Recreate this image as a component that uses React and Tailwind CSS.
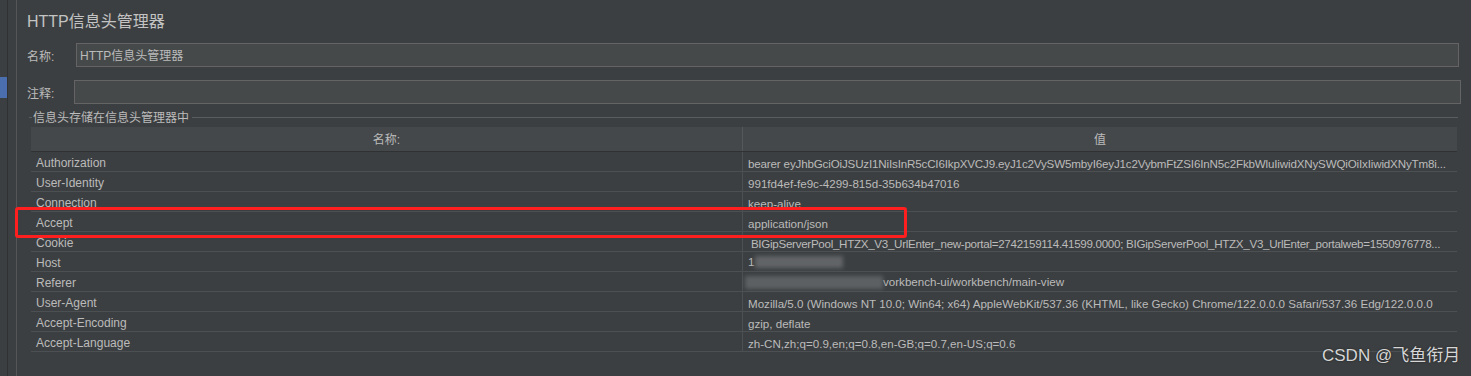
const rows = [
  ['Authorization', 'bearer eyJhbGciOiJSUzI1NiIsInR5cCI6IkpXVCJ9.eyJ1c2VySW5mbyI6eyJ1c2VybmFtZSI6InN5c2FkbWluIiwidXNySWQiOiIxIiwidXNyTm8i...', 'tracking-[-0.16px]'],
  ['User-Identity', '991fd4ef-fe9c-4299-815d-35b634b47016', ''],
  ['Connection', 'keep-alive', ''],
  ['Accept', 'application/json', ''],
  ['Cookie', ' BIGipServerPool_HTZX_V3_UrlEnter_new-portal=2742159114.41599.0000; BIGipServerPool_HTZX_V3_UrlEnter_portalweb=1550976778...', 'tracking-[-0.29px]'],
  ['Host', 'host', ''],
  ['Referer', 'referer', ''],
  ['User-Agent', 'Mozilla/5.0 (Windows NT 10.0; Win64; x64) AppleWebKit/537.36 (KHTML, like Gecko) Chrome/122.0.0.0 Safari/537.36 Edg/122.0.0.0', ''],
  ['Accept-Encoding', 'gzip, deflate', ''],
  ['Accept-Language', 'zh-CN,zh;q=0.9,en;q=0.8,en-GB;q=0.7,en-US;q=0.6', ''],
];

function Value({ name, value, track }) {
  if (name === 'Host') {
    return (
      <div className="flex items-center h-full pl-[5px] pt-[1px]">
        <span>1</span>
        <span className="ml-[1px] h-[12px] w-[88px] bg-[#6b6e71] blur-[2px] opacity-80" />
      </div>
    );
  }
  if (name === 'Referer') {
    return (
      <div className="flex items-center h-full pl-[2px] pt-[1px]">
        <span className="h-[13px] w-[138px] bg-[#66696c] blur-[2px] opacity-80" />
        <span>vorkbench-ui/workbench/main-view</span>
      </div>
    );
  }
  return <div className={`overflow-hidden pl-[5px] whitespace-pre leading-[19px] pt-[2px] ${track}`}>{value}</div>;
}

export default function App() {
  return (
    <div
      className="relative w-[1471px] h-[376px] bg-[#3c3f41] text-[#bbbbbb] flex overflow-hidden text-[12px]"
      style={{ fontFamily: '"Liberation Sans", "Noto Sans CJK SC", sans-serif' }}
    >
      {/* left tool strip */}
      <div className="w-[7px] shrink-0 h-full">
        <div className="mt-[77px] h-[21px] w-[7px] bg-[#4b6eaf]" />
      </div>
      <div className="w-[1px] shrink-0 h-full bg-[#2f3133]" />
      <div className="w-[8px] shrink-0 h-full" />
      <div className="w-[1px] shrink-0 h-full bg-[#545658]" />

      <div className="flex-1 min-w-0 flex flex-col pl-[10px] pr-[10px]">
        <div className="mt-[10px] h-[20px] text-[16px] leading-[20px] pt-[2px] text-[#c3c3c3]">HTTP信息头管理器</div>

        <div className="mt-[13px] h-[24px] flex items-center mr-[2px]">
          <div className="w-[49px] pt-[4px]">名称:</div>
          <div className="flex-1 h-full bg-[#45494a] border border-[#646464] flex items-center pl-[3px] pt-[2px]">HTTP信息头管理器</div>
        </div>

        <div className="mt-[13px] h-[24px] flex items-center">
          <div className="w-[47px] pt-[4px]">注释:</div>
          <div className="flex-1 h-full bg-[#45494a] border border-[#646464]" />
        </div>

        <div className="mt-[6px] h-[14px] flex items-center mr-[3px]">
          <div className="ml-[2px] w-[3px] h-[1px] bg-[#5a5d5f]" />
          <div className="px-[1px] leading-[14px] pt-[2px]">信息头存储在信息头管理器中</div>
          <div className="flex-1 h-[1px] bg-[#5a5d5f] ml-[2px]" />
        </div>

        <div className="mt-[3px] ml-[4px] mr-[4px] flex flex-col">
          <div className="flex h-[25px] bg-[#45484a] border-b border-[#2f3133]">
            <div className="w-[712px] shrink-0 border-r border-[#55585a] flex items-center justify-center pt-[2px]">名称:</div>
            <div className="flex-1 flex items-center justify-center pt-[2px]">值</div>
          </div>
          {rows.map(([name, value, track]) => (
            <div key={name} className="flex h-[20px] border-b border-[#4d5052]">
              <div className="w-[712px] shrink-0 border-r border-[#4d5052] pl-[5px] leading-[19px] pt-[2px]">{name}</div>
              <div className="flex-1 min-w-0 text-[11.6px]">
                <Value name={name} value={value} track={track} />
              </div>
            </div>
          ))}
        </div>
      </div>

      {/* annotation box */}
      <div className="absolute left-[15px] top-[207px] w-[892px] h-[31px] border-[3px] border-[#ff1f1f] rounded-[3px]" />

      {/* watermark */}
      <div
        className="absolute left-[1322px] top-[345px] text-[17px] leading-[22px] text-[#d6d6d6] whitespace-nowrap"
        style={{ textShadow: '0 0 2px rgba(0,0,0,0.6)' }}
      >
        CSDN @飞鱼衔月
      </div>
    </div>
  );
}
